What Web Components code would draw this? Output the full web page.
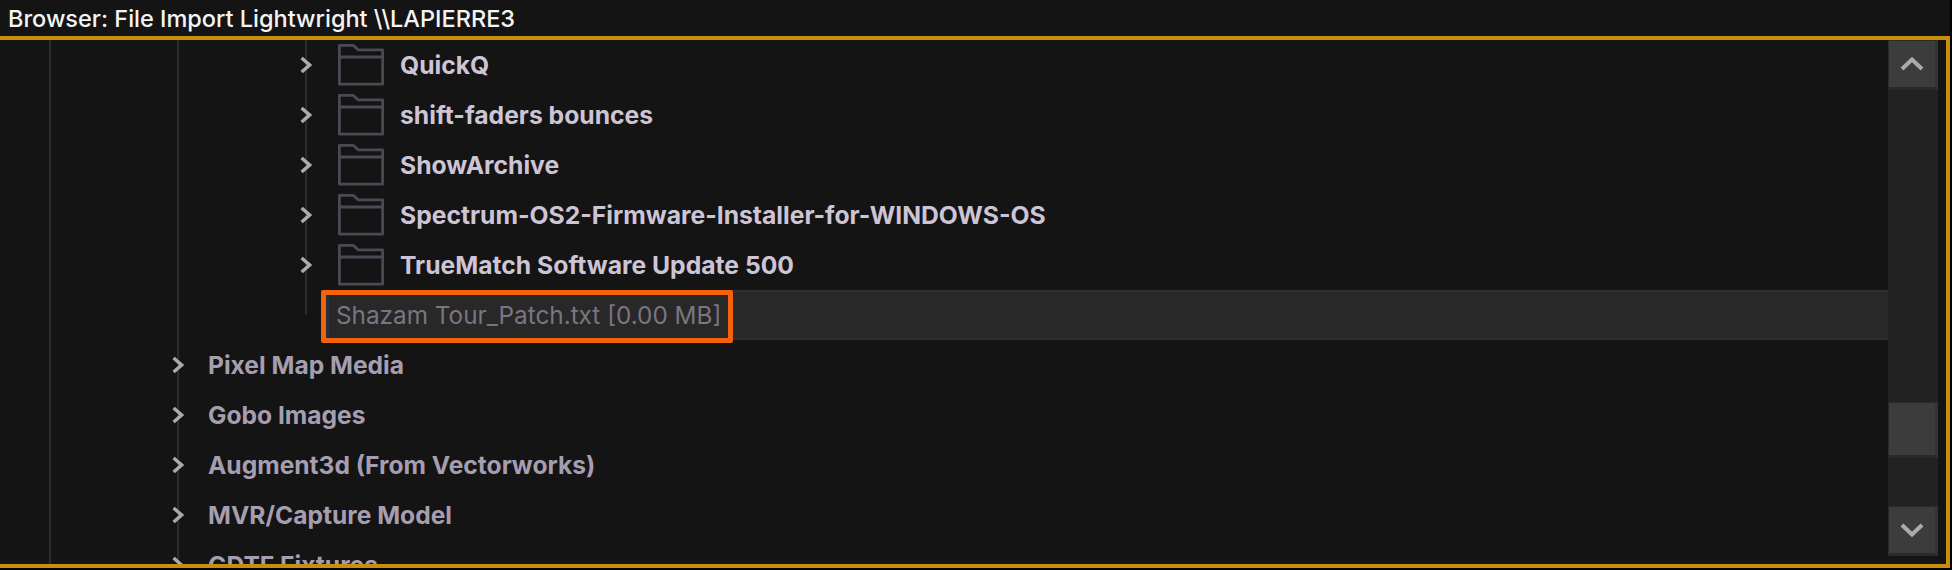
<!DOCTYPE html>
<html>
<head>
<meta charset="utf-8">
<title>Browser</title>
<style>
    html, body {
        background: #000;
        height: 100%;
        margin: 0;
        overflow: hidden;
    }
</style>
</head>
<body>
<browser-window title-text="Browser: File Import Lightwright \\LAPIERRE3">
    <tree-row depth="2" folder>QuickQ</tree-row>
    <tree-row depth="2" folder>shift-faders bounces</tree-row>
    <tree-row depth="2" folder>ShowArchive</tree-row>
    <tree-row depth="2" folder>Spectrum-OS2-Firmware-Installer-for-WINDOWS-OS</tree-row>
    <tree-row depth="2" folder>TrueMatch Software Update 500</tree-row>
    <tree-file>Shazam Tour_Patch.txt [0.00 MB]</tree-file>
    <tree-row depth="1">Pixel Map Media</tree-row>
    <tree-row depth="1">Gobo Images</tree-row>
    <tree-row depth="1">Augment3d (From Vectorworks)</tree-row>
    <tree-row depth="1">MVR/Capture Model</tree-row>
    <tree-row depth="1">GDTF Fixtures</tree-row>
</browser-window>

<script>
const guideStart = 49;
const guideStep = 128;
const guideColor = '#2c2c2c';

function guideBackground(count) {
    const layers = [];
    for (let i = 0; i < count; i++) {
        layers.push(`linear-gradient(${guideColor}, ${guideColor}) ${guideStart + guideStep * i}px 0 / 2px 100% no-repeat`);
    }
    return layers.join(', ');
}

class BrowserWindow extends HTMLElement {
    constructor() {
        super();

        this.renderRoot = this.attachShadow({ mode: 'open' });
    }

    connectedCallback() {
        this.renderRoot.innerHTML = `
            <style>
                :host {
                    display: flex;
                    flex-direction: column;
                    font-family: Inter, "Liberation Sans", sans-serif;
                    height: 568px;
                    width: 1950px;
                }

                header {
                    align-items: center;
                    background: #141414;
                    color: #f4f4f4;
                    display: flex;
                    font-size: 23.5px;
                    font-weight: 500;
                    height: 36px;
                    padding-left: 8px;
                    white-space: nowrap;
                }

                main {
                    background: #141414;
                    border: solid #c98f0c;
                    border-width: 4px 4px 4px 0;
                    display: flex;
                    flex: 1;
                    min-height: 0;
                }

                .tree {
                    flex: 1;
                    min-width: 0;
                    overflow: hidden;
                }

                tree-scrollbar {
                    margin-right: 8px;
                }
            </style>
            <header>${this.getAttribute('title-text')}</header>
            <main>
                <div class="tree"><slot></slot></div>
                <tree-scrollbar></tree-scrollbar>
            </main>
        `;
    }
}

window.customElements.define('browser-window', BrowserWindow);

class TreeChevron extends HTMLElement {
    constructor() {
        super();

        this.renderRoot = this.attachShadow({ mode: 'open' });
    }

    connectedCallback() {
        this.renderRoot.innerHTML = `
            <style>
                :host {
                    display: block;
                    height: 18px;
                    width: 12px;
                }

                svg {
                    display: block;
                }
            </style>
            <svg width="12" height="18" viewBox="0 0 12 18" fill="none" stroke="#ababab" stroke-width="3.4">
                <path d="M1.6 2 L9.6 9 L1.6 16"/>
            </svg>
        `;
    }
}

window.customElements.define('tree-chevron', TreeChevron);

class TreeFolder extends HTMLElement {
    constructor() {
        super();

        this.renderRoot = this.attachShadow({ mode: 'open' });
    }

    connectedCallback() {
        this.renderRoot.innerHTML = `
            <style>
                :host {
                    display: block;
                    height: 42px;
                    width: 46px;
                }

                svg {
                    display: block;
                }
            </style>
            <svg width="46" height="42" viewBox="0 0 46 42" fill="none" stroke="#4c4854" stroke-width="2.8" stroke-linejoin="round">
                <path d="M1.4 1.4 H15.5 L20 5.8 H44.6 V40.2 H1.4 Z M1.4 13 H44.6"/>
            </svg>
        `;
    }
}

window.customElements.define('tree-folder', TreeFolder);

class TreeRow extends HTMLElement {
    constructor() {
        super();

        this.renderRoot = this.attachShadow({ mode: 'open' });
    }

    connectedCallback() {
        const depth = Number(this.getAttribute('depth'));
        const folder = this.hasAttribute('folder');
        const chevronLeft = guideStart + guideStep * depth - 5;

        this.renderRoot.innerHTML = `
            <style>
                :host {
                    align-items: center;
                    background: ${guideBackground(depth + 1)};
                    box-sizing: border-box;
                    color: ${folder ? '#cdc5d6' : '#a69eb0'};
                    display: flex;
                    font-size: ${folder ? 24.7 : 24.6}px;
                    font-weight: 700;
                    height: 50px;
                    padding-left: ${chevronLeft}px;
                    white-space: nowrap;
                }

                tree-chevron {
                    margin-right: ${folder ? 26 : 24}px;
                }

                tree-folder {
                    margin-right: 16px;
                }
            </style>
            <tree-chevron></tree-chevron>
            ${folder ? '<tree-folder></tree-folder>' : ''}
            <slot></slot>
        `;
    }
}

window.customElements.define('tree-row', TreeRow);

class TreeFile extends HTMLElement {
    constructor() {
        super();

        this.renderRoot = this.attachShadow({ mode: 'open' });
    }

    connectedCallback() {
        this.renderRoot.innerHTML = `
            <style>
                :host {
                    background:
                        linear-gradient(${guideColor}, ${guideColor}) 305px 0 / 2px 25px no-repeat,
                        ${guideBackground(2)};
                    box-sizing: border-box;
                    display: block;
                    height: 50px;
                    padding-left: 326px;
                    position: relative;
                }

                .selection {
                    align-items: center;
                    background: #282828;
                    border-bottom: 2px solid #2a2f38;
                    border-left: 3px solid #263240;
                    border-top: 2px solid #2a2f38;
                    box-sizing: border-box;
                    color: #7b7582;
                    display: flex;
                    font-size: 24.3px;
                    height: 50px;
                    padding-left: 7px;
                    white-space: nowrap;
                }

                .callout {
                    border: 5px solid #f4620c;
                    border-radius: 2px;
                    box-sizing: border-box;
                    height: 53px;
                    left: 321px;
                    position: absolute;
                    top: 0;
                    width: 412px;
                }
            </style>
            <div class="selection"><slot></slot></div>
            <div class="callout"></div>
        `;
    }
}

window.customElements.define('tree-file', TreeFile);

class TreeScrollbar extends HTMLElement {
    constructor() {
        super();

        this.renderRoot = this.attachShadow({ mode: 'open' });
    }

    connectedCallback() {
        this.renderRoot.innerHTML = `
            <style>
                :host {
                    background: #222;
                    display: flex;
                    flex-direction: column;
                    height: 516px;
                    width: 50px;
                }

                .part {
                    align-items: center;
                    background: #3c3c3c;
                    border-color: #2a2a2a #333 #2a2a2a #2a2a2a;
                    border-style: solid;
                    border-width: 1px 3px 3px 1px;
                    box-sizing: border-box;
                    display: flex;
                    height: 50px;
                    justify-content: center;
                }

                .thumb {
                    height: 56px;
                    margin-top: 312px;
                    padding-bottom: 3px;
                }

                .down {
                    margin-top: auto;
                }

                svg {
                    display: block;
                }
            </style>
            <div class="part">
                <svg width="24" height="16" viewBox="0 0 24 16" fill="none" stroke="#ababab" stroke-width="4">
                    <path d="M2 13 L12 3.5 L22 13"/>
                </svg>
            </div>
            <div class="part thumb"></div>
            <div class="part down">
                <svg width="24" height="16" viewBox="0 0 24 16" fill="none" stroke="#ababab" stroke-width="4">
                    <path d="M2 3 L12 12.5 L22 3"/>
                </svg>
            </div>
        `;
    }
}

window.customElements.define('tree-scrollbar', TreeScrollbar);
</script>
</body>
</html>
